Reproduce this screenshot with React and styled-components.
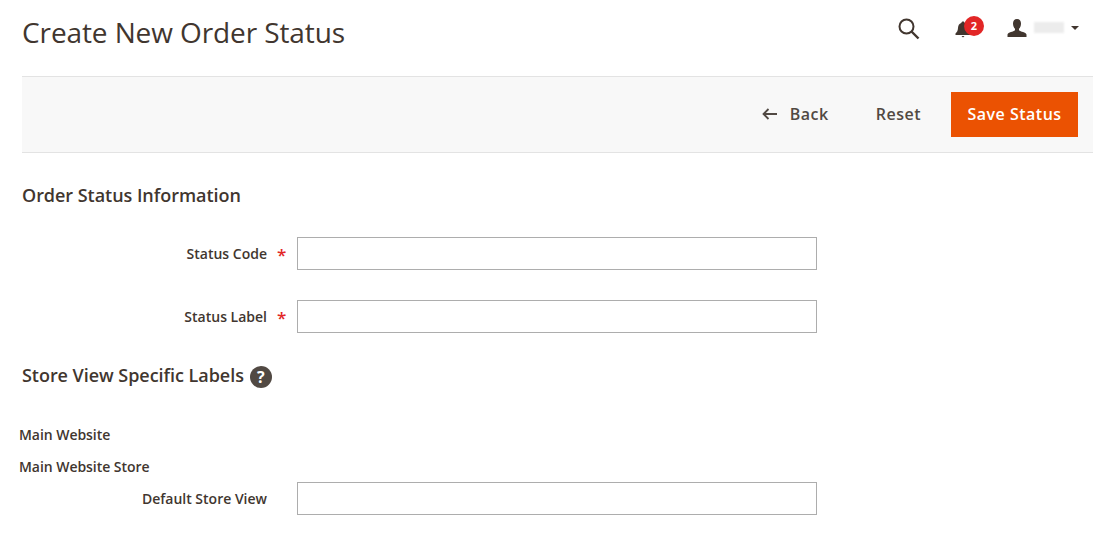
import React from 'react'
import styled, { createGlobalStyle } from 'styled-components'

const GlobalStyle = createGlobalStyle`
    html, body {
        margin: 0;
        padding: 0;
        background: #fff;
        font-family: "Open Sans", "Liberation Sans", sans-serif;
        color: #41362f;
    }
`

const Page = styled.div`
    width: 1120px;
    height: 547px;
    overflow: hidden;
    box-sizing: border-box;
    padding: 0 27px 0 22px;
`
const Header = styled.header`
    height: 76px;
    display: flex;
    align-items: flex-start;
    justify-content: space-between;
`
const Title = styled.h1`
    margin: 12px 0 0;
    font-size: 28px;
    line-height: 40px;
    font-weight: 400;
    letter-spacing: -0.1px;
    color: #41362f;
`
const Actions = styled.div`
    display: flex;
    align-items: center;
    margin-top: 15px;
    height: 28px;
    margin-right: 14px;
`
const IconSlot = styled.div`
    position: relative;
    display: flex;
    align-items: center;
    width: ${p => p.width}px;
`
const Badge = styled.span`
    position: absolute;
    left: 10px;
    top: -4px;
    width: 20px;
    height: 20px;
    border-radius: 50%;
    background: #e22626;
    color: #fff;
    font-size: 11px;
    font-weight: 700;
    line-height: 20px;
    text-align: center;
`
const BlurredName = styled.span`
    width: 30px;
    height: 11px;
    margin: 0 7px 3px 7px;
    background: #ececec;
    filter: blur(1px);
`
const Caret = styled.span`
    width: 0;
    height: 0;
    margin-bottom: 2px;
    border-left: 4px solid transparent;
    border-right: 4px solid transparent;
    border-top: 4px solid #41362f;
`
const Toolbar = styled.div`
    height: 77px;
    box-sizing: border-box;
    background: #f8f8f8;
    border-top: 1px solid #e3e3e3;
    border-bottom: 1px solid #e3e3e3;
    display: flex;
    align-items: center;
    justify-content: flex-end;
    padding-right: 15px;
`
const TextButton = styled.button`
    display: flex;
    align-items: center;
    gap: 13px;
    border: 0;
    padding: 0 0 2px;
    margin-right: ${p => p.gap}px;
    background: none;
    font-family: inherit;
    font-size: 16px;
    font-weight: 600;
    letter-spacing: 0.5px;
    color: #514943;
`
const PrimaryButton = styled.button`
    width: 127px;
    height: 45px;
    border: 0;
    padding: 0 0 2px;
    background: #eb5202;
    color: #fff;
    font-family: inherit;
    font-size: 16px;
    font-weight: 600;
    letter-spacing: 0.5px;
`
const SectionTitle = styled.h2`
    display: flex;
    align-items: center;
    gap: 7px;
    margin: ${p => p.top}px 0 0;
    height: 24px;
    font-size: 18px;
    line-height: 22px;
    font-weight: 600;
    letter-spacing: -0.04px;
    color: #41362f;
`
const HelpIcon = styled.span`
    width: 22px;
    height: 22px;
    margin: 3px 0 0 -1px;
    border-radius: 50%;
    background: #514943;
    color: #fff;
    font-size: 16px;
    font-weight: 700;
    line-height: 22px;
    text-align: center;
`
const Field = styled.div`
    display: grid;
    grid-template-columns: 245px 30px 520px;
    align-items: center;
    margin-top: ${p => p.top}px;
`
const Label = styled.label`
    text-align: right;
    font-size: 14px;
    font-weight: 600;
    color: #41362f;
`
const Required = styled.span`
    padding: 2px 0 0 10px;
    font-size: 17px;
    font-weight: 600;
    line-height: 20px;
    color: #e22626;
`
const Input = styled.input`
    box-sizing: border-box;
    width: 520px;
    height: 33px;
    border: 1px solid #adadad;
    background: #fff;
    padding: 0 10px;
`
const ScopeLabel = styled.div`
    margin: ${p => p.top}px 0 0 -3px;
    height: 20px;
    font-size: 14px;
    line-height: 20px;
    font-weight: 600;
    letter-spacing: -0.05px;
    color: #41362f;
`

export default function App() {
    return <Page>
        <GlobalStyle />
        <Header>
            <Title>Create New Order Status</Title>
            <Actions>
                <IconSlot width={56}>
                    <svg width="22" height="22" viewBox="0 0 22 22" fill="none" stroke="#41362f">
                        <circle cx="8.5" cy="8.5" r="7" strokeWidth="2" />
                        <path d="M13.5 13.5 L20.5 20.5" strokeWidth="2.4" />
                    </svg>
                </IconSlot>
                <IconSlot width={53}>
                    <svg width="18" height="18" viewBox="0 0 18 18" fill="#41362f">
                        <path d="M9 1.5c-1 0-1.6.7-1.7 1.5C5 3.700 4.200 5.600 4 8c-.2 2.500-.8 4-2.500 5.500V15h15v-1.500C14.800 12 14.200 10.500 14 8c-.2-2.400-1-4.300-3.300-5C10.600 2.200 10 1.500 9 1.500z" />
                        <path d="M7.500 16h3L9 17.500z" />
                    </svg>
                    <Badge>2</Badge>
                </IconSlot>
                <IconSlot width={20}>
                    <svg width="20" height="20" viewBox="0 0 20 20" fill="#41362f">
                        <path d="M10 0C7.400 0 6 1.800 6 4.500c0 2.400 1 4.300 2 5.300v1.400C6.500 12.800 1 13 .5 15.500V18h19v-2.500C19 13 13.500 12.800 12 11.200V9.800c1-1 2-2.900 2-5.300C14 1.800 12.600 0 10 0z" />
                    </svg>
                </IconSlot>
                <BlurredName />
                <Caret />
            </Actions>
        </Header>
        <Toolbar>
            <TextButton gap={47}>
                <svg width="15" height="12" viewBox="0 0 15 12" fill="none" stroke="#514943" strokeWidth="1.800">
                    <path d="M15 6H2M6.500 1 1.500 6l5 5" />
                </svg>
                Back
            </TextButton>
            <TextButton gap={30}>Reset</TextButton>
            <PrimaryButton>Save Status</PrimaryButton>
        </Toolbar>
        <SectionTitle top={30}>Order Status Information</SectionTitle>
        <Field top={30}>
            <Label>Status Code</Label>
            <Required>*</Required>
            <Input />
        </Field>
        <Field top={30}>
            <Label>Status Label</Label>
            <Required>*</Required>
            <Input />
        </Field>
        <SectionTitle top={30}>Store View Specific Labels <HelpIcon>?</HelpIcon></SectionTitle>
        <ScopeLabel top={38}>Main Website</ScopeLabel>
        <ScopeLabel top={12}>Main Website Store</ScopeLabel>
        <Field top={5}>
            <Label>Default Store View</Label>
            <span />
            <Input />
        </Field>
    </Page>
}
